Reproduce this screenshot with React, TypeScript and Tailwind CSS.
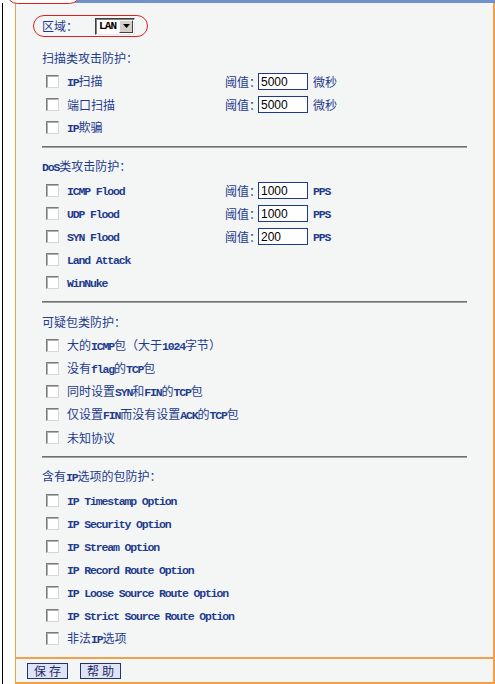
import React from "react";

type Row = { label: string; th?: string; unit?: string };
type Section = { title: string; rows: Row[] };

const sections: Section[] = [
  {
    title: "扫描类攻击防护：",
    rows: [
      { label: "IP扫描", th: "5000", unit: "微秒" },
      { label: "端口扫描", th: "5000", unit: "微秒" },
      { label: "IP欺骗" },
    ],
  },
  {
    title: "DoS类攻击防护：",
    rows: [
      { label: "ICMP Flood", th: "1000", unit: "PPS" },
      { label: "UDP Flood", th: "1000", unit: "PPS" },
      { label: "SYN Flood", th: "200", unit: "PPS" },
      { label: "Land Attack" },
      { label: "WinNuke" },
    ],
  },
  {
    title: "可疑包类防护：",
    rows: [
      { label: "大的ICMP包（大于1024字节）" },
      { label: "没有flag的TCP包" },
      { label: "同时设置SYN和FIN的TCP包" },
      { label: "仅设置FIN而没有设置ACK的TCP包" },
      { label: "未知协议" },
    ],
  },
  {
    title: "含有IP选项的包防护：",
    rows: [
      { label: "IP Timestamp Option" },
      { label: "IP Security Option" },
      { label: "IP Stream Option" },
      { label: "IP Record Route Option" },
      { label: "IP Loose Source Route Option" },
      { label: "IP Strict Source Route Option" },
      { label: "非法IP选项" },
    ],
  },
];

function Mixed({ text }: { text: string }) {
  const parts = text.match(/[\x00-\x7F]+|[^\x00-\x7F]+/g) || [];
  return (
    <span className="whitespace-pre text-[12px] leading-[12px]">
      {parts.map((p, i) =>
        /^[\x00-\x7F]+$/.test(p) ? (
          <span
            key={i}
            className="font-['Liberation_Mono',monospace] text-[11.5px] font-bold tracking-[-1.15px]"
          >
            {p}
          </span>
        ) : (
          <span key={i} className="text-[12px]">
            {p}
          </span>
        )
      )}
    </span>
  );
}

function Checkbox() {
  return (
    <div className="w-[13px] h-[13px] shrink-0 bg-white border border-t-[#7b7b7b] border-l-[#7b7b7b] border-r-[#d6d6d6] border-b-[#d6d6d6] shadow-[inset_1px_1px_0_#b0b0b0]" />
  );
}

function Divider() {
  return <div className="mt-[7px] h-[2px] bg-[#a2a2a2] border-t border-[#6f6f6f]" />;
}

export default function App() {
  return (
    <div className="relative w-[495px] h-[684px] overflow-hidden bg-white flex font-['Noto_Sans_CJK_SC',sans-serif] text-[12px] leading-[12px] text-[#1e3b8d]">
      <div className="w-[2px]" />
      <div className="w-px bg-black mt-[3px]" />
      <div className="w-[12px]" />
      <div className="flex-1 flex flex-col">
        <div className="h-[3px] bg-[#7191cb]" />
        <div className="flex-1 flex flex-col bg-[#f4f6f5] border-l border-r-2 border-b-2 border-[#f4a04a]">
          <div className="flex flex-col px-[26px]">
            {/* Region row */}
            <div className="mt-[12px] h-[22px] flex items-center">
              <span className="text-[12px] leading-[12px] w-[53px]">区域：</span>
              <div className="w-[40px] h-[17px] flex items-stretch bg-white border border-t-[#404040] border-l-[#404040] border-r-[#e8e8e8] border-b-[#e8e8e8] shadow-[inset_1px_1px_0_#808080]">
                <span className="flex-1 flex items-center pl-[3px] font-['Liberation_Mono',monospace] text-[11px] font-bold text-black leading-none tracking-[-0.9px]">
                  LAN
                </span>
                <div className="w-[14px] m-[1px] bg-[#d4d0c8] border border-t-[#f4f4f4] border-l-[#f4f4f4] border-r-[#404040] border-b-[#404040] flex items-center justify-center">
                  <svg width="7" height="4" viewBox="0 0 7 4">
                    <path d="M0 0H7L3.5 4Z" fill="#000" />
                  </svg>
                </div>
              </div>
            </div>

            {sections.map((s, si) => (
              <div key={si} className="flex flex-col">
                {si > 0 && <Divider />}
                <div
                  className={
                    (si === 0 ? "mt-[9px]" : "mt-[7px]") +
                    " h-[23px] flex items-center"
                  }
                >
                  <Mixed text={s.title} />
                </div>
                <div className="mt-[1px] flex flex-col">
                  {s.rows.map((r, ri) => (
                    <div key={ri} className="h-[23px] flex items-center pl-[4px]">
                      <Checkbox />
                      <div className="ml-[8px] w-[158px] flex items-center">
                        <Mixed text={r.label} />
                      </div>
                      {r.th && (
                        <div className="flex items-center">
                          <span className="text-[12px] leading-[12px] w-[33px] whitespace-nowrap">
                            阈值：
                          </span>
                          <div className="w-[50px] h-[17px] bg-white border border-[#1f3a8c] flex items-center pl-[2px] font-['Liberation_Sans',sans-serif] text-[12px] text-black leading-none">
                            {r.th}
                          </div>
                          <span className="ml-[5px] flex items-center">
                            <Mixed text={r.unit || ""} />
                          </span>
                        </div>
                      )}
                    </div>
                  ))}
                </div>
              </div>
            ))}
            <div className="h-[7px]" />
          </div>
          <div className="flex-1 border-t-2 border-[#f4a04a] flex items-center pl-[11px] gap-[12px]">
            <div className="w-[41px] h-[16px] bg-[#dfe4f5] border border-[#25336f] flex items-center justify-center text-[12px] leading-none text-[#1c2a66] tracking-[3px] pl-[3px]">
              保存
            </div>
            <div className="w-[41px] h-[16px] bg-[#dfe4f5] border border-[#25336f] flex items-center justify-center text-[12px] leading-none text-[#1c2a66] tracking-[3px] pl-[3px]">
              帮助
            </div>
          </div>
        </div>
      </div>

      {/* red annotation ellipses */}
      <div className="absolute left-[6px] top-[-19px] w-[75px] h-[23px] rounded-full bg-white border border-[#e02020]" />
      <div className="absolute left-[33px] top-[15px] w-[115px] h-[22px] rounded-full border border-[#e02020] pointer-events-none" />
    </div>
  );
}
